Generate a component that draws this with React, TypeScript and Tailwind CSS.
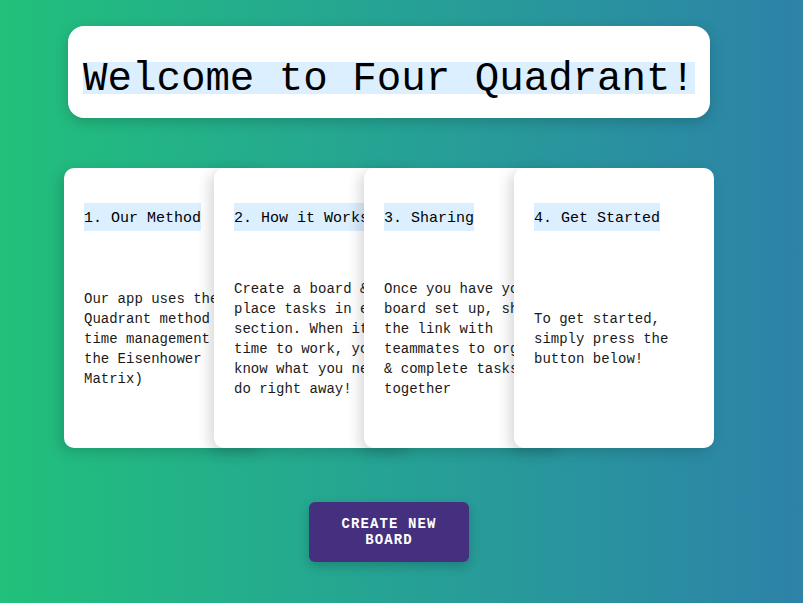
import React from "react";

const cards = [
  {
    title: "1. Our Method",
    body: "Our app uses the Quadrant method of time management (aka the Eisenhower Matrix)",
  },
  {
    title: "2. How it Works",
    body: "Create a board & place tasks in each section. When it's time to work, you'll know what you need to do right away!",
  },
  {
    title: "3. Sharing",
    body: "Once you have your board set up, share the link with teammates to organize & complete tasks together",
  },
  {
    title: "4. Get Started",
    body: "To get started, simply press the button below!",
  },
];

export default function App() {
  return (
    <div
      className="w-[803px] h-[603px] overflow-hidden bg-gradient-to-r from-[#22c07a] to-[#2d82a8] text-black"
      style={{ fontFamily: '"Liberation Mono", "DejaVu Sans Mono", monospace' }}
    >
      <div className="ml-[64px] w-[650px] flex flex-col items-center pt-[26px]">
        <div className="w-[642px] h-[92px] bg-white rounded-[16px] shadow-[0_4px_14px_rgba(0,0,0,0.18)] flex items-center justify-center">
          <h1 className="inline-block bg-[#dcefff] h-[32px] leading-[34px] text-[40.8px] font-normal whitespace-nowrap mt-[12px] overflow-visible">
            Welcome to Four Quadrant!
          </h1>
        </div>

        <div className="mt-[50px] flex w-[650px]">
          {cards.map((c, i) => (
            <div
              key={i}
              className={
                "relative w-[200px] h-[280px] shrink-0 bg-white rounded-[10px] shadow-[-4px_4px_14px_rgba(0,0,0,0.16)] flex flex-col pl-5 pb-5 " +
                (i > 0 ? "-ml-[50px]" : "")
              }
            >
              <div className="mt-[35px]">
                <span className="inline-block bg-[#dcefff] h-[28px] leading-[31px] text-[15px] whitespace-nowrap">
                  {c.title}
                </span>
              </div>
              <div className="mt-[19px] flex-1 flex items-center">
                <p className="w-[180px] text-[14px] leading-[20px] text-[#1a1a1a]">{c.body}</p>
              </div>
            </div>
          ))}
        </div>

        <button className="mt-[54px] w-[160px] h-[60px] bg-[#44307f] rounded-[6px] shadow-[0_4px_12px_rgba(0,0,0,0.2)] text-white text-[14px] font-bold leading-[16px] tracking-[1.1px] uppercase px-6">
          Create New Board
        </button>
      </div>
    </div>
  );
}
